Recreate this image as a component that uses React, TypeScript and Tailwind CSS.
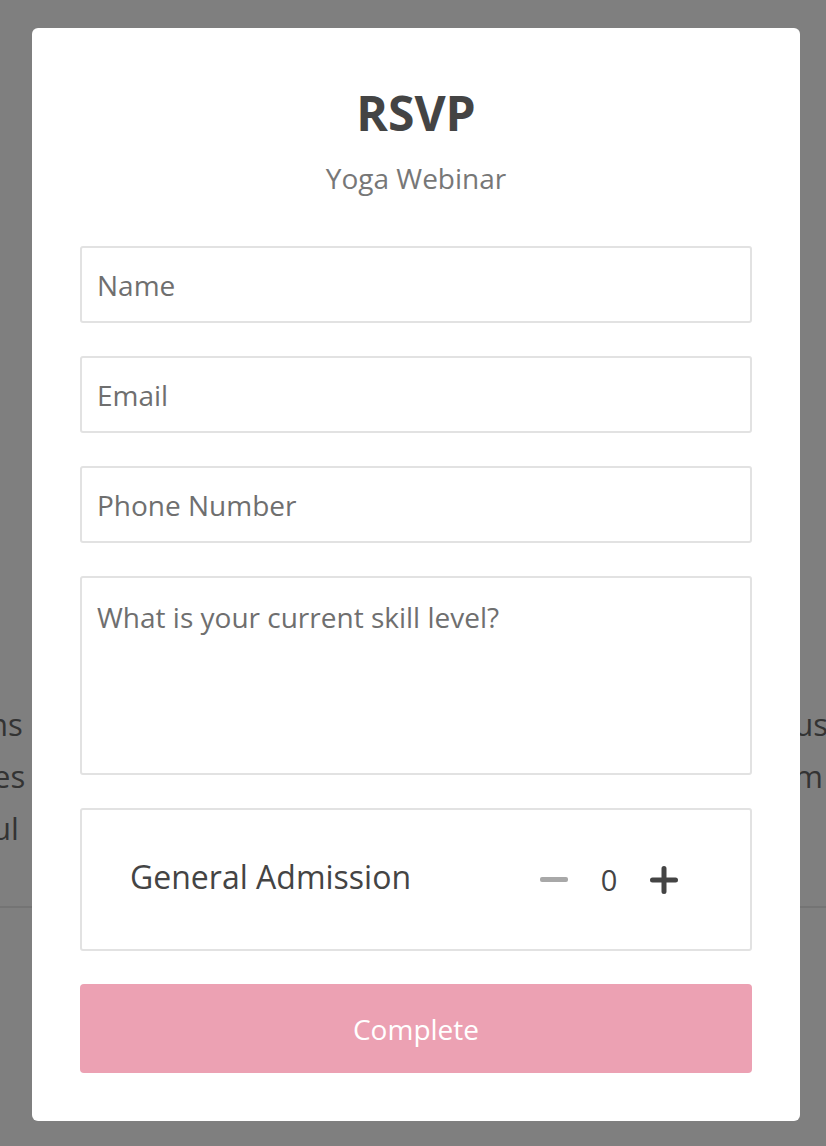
import React from "react";

function Field({ label, tall }: { label: string; tall?: boolean }) {
  return (
    <div
      className={`border-2 border-[#e2e2e2] rounded-[3px] px-[15px] ${
        tall ? "h-[199px] pt-[21px]" : "h-[77px] flex items-center"
      }`}
    >
      <span className="text-[28px] leading-[36px] text-[#6f6f6f]">{label}</span>
    </div>
  );
}

export default function App() {
  return (
    <div
      className="relative w-[826px] h-[1146px] overflow-hidden bg-[#7f7f7f]"
      style={{ fontFamily: '"Open Sans", "Noto Sans", sans-serif' }}
    >
      {/* background page content (behind overlay) */}
      <div className="pt-[698px] text-[31px] leading-[52px] text-[#333333]">
        <div className="flex justify-between">
          <span className="-ml-[11px]">ns</span>
          <span className="-mr-[2px]">us</span>
        </div>
        <div className="flex justify-between">
          <span className="-ml-[7px]">es</span>
          <span className="mr-[3px]">m</span>
        </div>
        <div className="flex justify-between">
          <span className="-ml-[8px]">ul</span>
          <span></span>
        </div>
        <div className="mt-[52px] border-t-2 border-[#747474]"></div>
      </div>

      {/* modal */}
      <div className="absolute left-[32px] top-[28px] w-[768px] h-[1093px] bg-white rounded-[6px] px-[48px] pt-[55px]">
        <h1 className="text-center text-[48px] leading-[60px] font-bold text-[#444444]">RSVP</h1>
        <p className="text-center text-[28px] leading-[36px] text-[#777777] mt-[17px]">Yoga Webinar</p>

        <div className="mt-[50px] flex flex-col gap-[33px]">
          <Field label="Name" />
          <Field label="Email" />
          <Field label="Phone Number" />
          <Field label="What is your current skill level?" tall />
          <div className="h-[143px] border-2 border-[#e2e2e2] rounded-[3px] flex items-center pl-[48px] pr-[72px]">
            <span className="text-[32px] leading-[40px] text-[#444444] -mt-[6px]">General Admission</span>
            <div className="ml-auto flex items-center gap-[32px]">
              <div className="w-[28px] h-[5px] rounded-[2px] bg-[#a8a8a8]"></div>
              <span className="text-[29px] leading-[36px] text-[#444444] w-[18px] text-center">0</span>
              <svg width="28" height="28" viewBox="0 0 28 28">
                <path d="M14 2.5V25.5M2.5 14H25.5" stroke="#444444" strokeWidth="5" strokeLinecap="round" />
              </svg>
            </div>
          </div>
        </div>

        <button className="mt-[33px] w-full h-[89px] rounded-[4px] bg-[#eca1b3] text-white text-[28px]">
          Complete
        </button>
      </div>
    </div>
  );
}
